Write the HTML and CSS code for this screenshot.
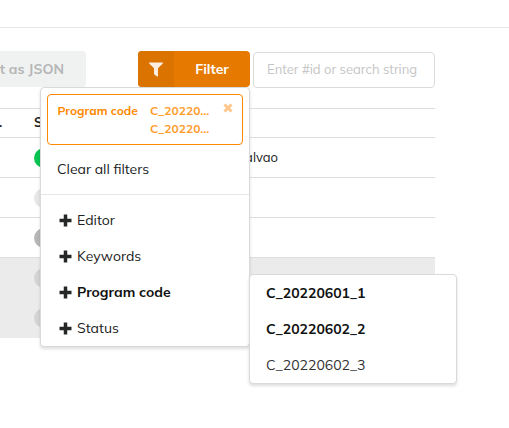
FILE: index.html
```html
<!DOCTYPE html>
<html lang="en">
<head>
<meta charset="utf-8">
<title>Submissions</title>
<link rel="stylesheet" href="styles.css">
</head>
<body>
<header class="topbar"></header>
<div class="toolbar">
  <button class="export">t as JSON</button>
  <div class="filter">
    <button class="filter-button">
      <span class="filter-icon"><svg width="14" height="15" viewBox="0 0 14 15"><path d="M.5.5h13c.5 0 .6.6.3.9L9 6.300V14c0 .6-.5.7-.9.400L5.400 12.400c-.3-.2-.4-.4-.4-.8V6.300L.2 1.400C-.1 1.100 0 .5.5.5z"/></svg></span>
      <span class="filter-label">Filter</span>
    </button>
    <div class="menu">
      <div class="active-filter">
        <span class="name">Program code</span>
        <span class="values"><span>C_20220...</span><span>C_20220...</span></span>
        <svg class="close" width="10" height="10" viewBox="0 0 10 10"><path d="M1.500 1.500l7 7m0-7l-7 7"/></svg>
      </div>
      <div class="item clear"><span>Clear all filters</span></div>
      <div class="divider"></div>
      <div class="item"><svg class="plus" width="13" height="13" viewBox="0 0 13 13"><path d="M6.500 .5v12M.5 6.500h12"/></svg><span>Editor</span></div>
      <div class="item"><svg class="plus" width="13" height="13" viewBox="0 0 13 13"><path d="M6.500 .5v12M.5 6.500h12"/></svg><span>Keywords</span></div>
      <div class="item selected"><svg class="plus" width="13" height="13" viewBox="0 0 13 13"><path d="M6.500 .5v12M.5 6.500h12"/></svg><span>Program code</span>
        <div class="submenu">
          <div class="item code"><span>C_20220601_1</span></div>
          <div class="item code"><span>C_20220602_2</span></div>
          <div class="item code light"><span>C_20220602_3</span></div>
        </div>
      </div>
      <div class="item"><svg class="plus" width="13" height="13" viewBox="0 0 13 13"><path d="M6.500 .5v12M.5 6.500h12"/></svg><span>Status</span></div>
    </div>
  </div>
  <div class="search">Enter #id or search string</div>
</div>
<main class="table">
  <div class="row head"><span class="id">.</span><span>S</span></div>
  <div class="row"><span class="dot green"></span><span class="owner">Galvao</span></div>
  <div class="row"><span class="dot pale"></span></div>
  <div class="row"><span class="dot gray"></span></div>
  <div class="row shaded"><span class="dot muted"></span></div>
  <div class="row shaded last"><span class="dot muted"></span></div>
</main>
</body>
</html>
```
FILE: styles.css
```css
* { box-sizing: border-box; }
body {
  margin: 0;
  height: 428px;
  overflow: hidden;
  background: #fff;
  color: #212223;
  font: 14px/18px Mulish, Muli, Lato, sans-serif;
}
button { border: 0; padding: 0; font: inherit; }
svg { display: block; flex: none; }
.topbar { height: 28px; border-bottom: 1px solid #e7e7e7; }
.toolbar { display: flex; height: 80px; padding-top: 23px; }
.export {
  display: flex;
  align-items: center;
  justify-content: flex-end;
  width: 86px;
  height: 36px;
  padding-right: 22px;
  border-radius: 0 4px 4px 0;
  background: #f0f2f1;
  color: #b6b7b7;
  font-weight: 700;
  white-space: nowrap;
}
.filter { position: relative; width: 112px; margin-left: 52px; }
.filter-button {
  display: flex;
  width: 112px;
  height: 36px;
  border-radius: 4px;
  overflow: hidden;
  background: #e67a00;
  color: #fff;
  font-weight: 700;
}
.filter-icon {
  display: flex;
  align-items: center;
  justify-content: center;
  width: 36px;
  height: 36px;
  background: #da7300;
}
.filter-icon svg { fill: #fbeedf; }
.filter-label { flex: 1; align-self: center; text-align: center; }
.search {
  width: 182px;
  height: 36px;
  margin: 1px 0 0 3px;
  padding: 7px 13px;
  border: 1px solid #dcdcdd;
  border-radius: 4px;
  color: #c5c5c5;
  font-size: 13px;
  white-space: nowrap;
}
.menu {
  position: absolute;
  z-index: 2;
  top: 36px;
  right: 0;
  width: 210px;
  height: 260px;
  padding-top: 6px;
  border: 1px solid #d9dadb;
  border-radius: 4px;
  background: #fff;
  box-shadow: 0 2px 3px rgba(34, 36, 38, .15);
}
.active-filter {
  display: flex;
  height: 51px;
  margin: 0 6px;
  padding: 7px 9px;
  border: 1px solid #ff8800;
  border-radius: 4px;
  color: #ff8800;
  font-size: 12px;
  font-weight: 700;
}
.name { width: 93px; padding-left: .5px; }
.values { display: flex; flex-direction: column; width: 74px; padding-left: .5px; color: #ff9c2c; }
.close { margin-top: 1px; fill: none; stroke: #fdc78c; stroke-width: 3; }
.item {
  position: relative;
  display: flex;
  align-items: center;
  height: 36px;
  padding-left: 18px;
  white-space: nowrap;
}
.item.clear { height: 49px; padding: 0 0 2px 16px; }
.divider { height: 1px; margin-bottom: 7px; background: #e7e7e8; }
.plus { margin-right: 5px; fill: none; stroke: #252626; stroke-width: 3.500; }
.selected { font-weight: 700; color: #101111; }
.submenu {
  position: absolute;
  z-index: 3;
  top: 0;
  left: 208px;
  width: 208px;
  height: 110px;
  border: 1px solid #d9dadb;
  border-radius: 4px;
  background: #fff;
  box-shadow: 0 2px 3px rgba(34, 36, 38, .15);
}
.item.code { padding-left: 16px; }
.light { font-weight: 400; color: #333; }
.table { width: 435px; }
.row { position: relative; display: flex; align-items: center; height: 40px; border-top: 1px solid #dededf; }
.head { height: 29px; padding-bottom: 2px; font-weight: 700; font-size: 13px; }
.id { width: 34px; margin-left: -1px; margin-right: 1px; }
.dot { width: 20px; height: 20px; margin-left: 34px; border-radius: 50%; }
.green { background: #08c553; }
.pale { background: #e7e7e7; }
.gray { background: #b7b7b7; }
.muted { background: #d3d3d3; }
.owner { width: 224px; padding-bottom: 2px; text-align: right; font-size: 13px; }
.shaded { background: #ebebeb; }
.last { height: 41px; border-top-color: #ebebeb; }
```
